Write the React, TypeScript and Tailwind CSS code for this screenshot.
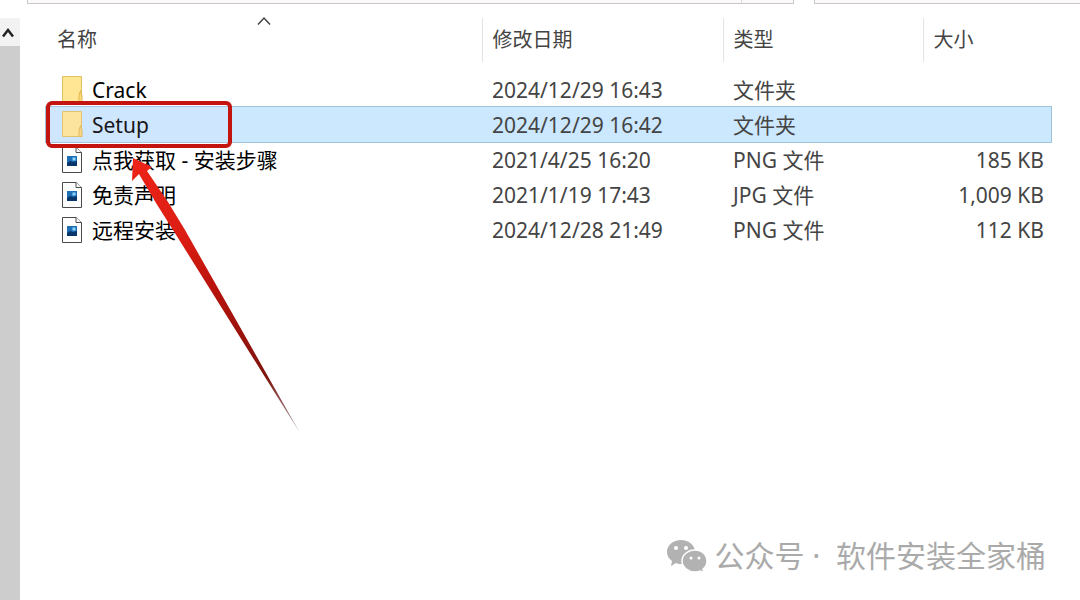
import React, { useState } from 'react';

type Kind = 'folder' | 'image';

interface Entry {
  name: string;
  kind: Kind;
  modified: string;
  type: string;
  size: string;
}

const ENTRIES: Entry[] = [
  { name: 'Crack', kind: 'folder', modified: '2024/12/29 16:43', type: '文件夹', size: '' },
  { name: 'Setup', kind: 'folder', modified: '2024/12/29 16:42', type: '文件夹', size: '' },
  { name: '点我获取 - 安装步骤', kind: 'image', modified: '2021/4/25 16:20', type: 'PNG 文件', size: '185 KB' },
  { name: '免责声明', kind: 'image', modified: '2021/1/19 17:43', type: 'JPG 文件', size: '1,009 KB' },
  { name: '远程安装', kind: 'image', modified: '2024/12/28 21:49', type: 'PNG 文件', size: '112 KB' },
];

const FolderIcon = () => (
  <svg className="w-6 h-7 shrink-0" viewBox="0 0 24 28" aria-hidden="true">
    <path d="M2.5 .5h19v25h-19z" fill="#ffe694" stroke="#e3c15f" />
    <path d="M19 25.5v-6l1.500-5 1.500 5v6z" fill="#fbd978" stroke="#dfb74e" />
  </svg>
);

const ImageIcon = () => (
  <svg className="w-6 h-7 shrink-0" viewBox="0 0 24 28" aria-hidden="true">
    <path d="M2.5 1.500H16l5.500 5v20h-19z" fill="#fff" stroke="#4a4a4a" />
    <path d="M16 1.500v5h5.500" fill="#fff" stroke="#4a4a4a" />
    <path d="M7 10h10v10H7z" fill="#1f6fb5" />
    <path d="M7 17l3-2 3 1 4-1v5H7z" fill="#08366b" />
    <path d="M12.500 11.500h3v3h-3z" fill="#8fd8ff" />
  </svg>
);

const Arrow = () => (
  <svg className="absolute left-[120px] top-[150px] w-[190px] h-[290px] pointer-events-none" viewBox="120 150 190 290" aria-hidden="true">
    <defs>
      <linearGradient id="arrow" gradientUnits="userSpaceOnUse" x1="133" y1="158" x2="299" y2="433">
        <stop offset="0" stopColor="#ee2418" />
        <stop offset="0.3" stopColor="#da1d13" />
        <stop offset="0.5" stopColor="#b3120b" />
        <stop offset="0.8" stopColor="#7d160f" />
        <stop offset="1" stopColor="#a9a3a5" />
      </linearGradient>
    </defs>
    <path
      d="M133 158L152 167L147 171L168 202L185 230L300 433L173 230L156 203L139 174L132 181Z"
      fill="url(#arrow)"
    />
  </svg>
);

const WechatIcon = () => (
  <svg className="w-10 h-9" viewBox="0 0 40 36" aria-hidden="true">
    <path d="M14 2C6 2 0 7 0 14c0 4 2 7 5 9l-1 5 5-3c2 1 3 1 5 1 8 0 14-5 14-12S22 2 14 2z" fill="#b2b2b2" />
    <path
      d="M28 12c-7 0-13 5-13 11s6 11 13 11c2 0 4 0 5-1l4 2-1-4c3-2 4-5 4-8 0-6-5-11-12-11z"
      fill="#b2b2b2"
      stroke="#fff"
      strokeWidth="1.500"
    />
    <g fill="#fff">
      <circle cx="9" cy="10" r="2" />
      <circle cx="19" cy="10" r="2" />
      <circle cx="24" cy="20" r="1.500" />
      <circle cx="32" cy="20" r="1.500" />
    </g>
  </svg>
);

export default function App() {
  const [selected, setSelected] = useState('Setup');

  return (
    <div className="relative min-h-screen flex bg-white overflow-hidden text-[20px] leading-6 text-[#444] font-['Noto_Sans','Noto_Sans_CJK_SC',sans-serif]">
      {/* Scrollbar of the navigation pane */}
      <div className="w-5 shrink-0 flex flex-col pt-[18px]">
        <button aria-label="向上滚动" className="h-7 flex items-center justify-center bg-[#f2f2f2]">
          <svg className="w-4 h-4" viewBox="0 0 16 16" fill="none" aria-hidden="true">
            <path d="M1 12.500L6 6l5 6.500" stroke="#222" strokeWidth="2.500" />
          </svg>
        </button>
        <div className="flex-1 bg-[#cdcdcd]" />
      </div>

      <main className="flex-1 min-w-0 flex flex-col">
        {/* Bottom edge of the address bar and the search box */}
        <div className="flex gap-5 h-1 pl-[7px]">
          <div className="flex-1 flex justify-end bg-[#fcf9fb] border border-t-0 border-[#c9c7c8]">
            <div className="w-[52px] border-l border-[#dcdadb]" />
          </div>
          <div className="w-[266px] bg-[#fcf9fb] border border-t-0 border-r-0 border-[#c9c7c8]" />
        </div>

        <div className="pl-[26px] pr-[29px] pt-[14px]">
          <table className="w-full table-fixed border-collapse text-left">
            <colgroup>
              <col />
              <col className="w-[241px]" />
              <col className="w-[200px]" />
              <col className="w-32" />
            </colgroup>
            <thead>
              <tr className="h-[44px]">
                <th className="relative p-0 pl-[11px] font-normal">
                  名称
                  <svg className="absolute left-1/2 -top-1 w-4 h-4 -translate-x-1/2" viewBox="0 0 16 16" fill="none" aria-hidden="true">
                    <path d="M2 10.500L8 4l6 6.500" stroke="#444" strokeWidth="1.500" />
                  </svg>
                </th>
                <th className="p-0 pl-[10px] font-normal border-l border-[#e3e3e3]">修改日期</th>
                <th className="p-0 pl-[10px] font-normal border-l border-[#e3e3e3]">类型</th>
                <th className="p-0 pl-[10px] font-normal border-l border-[#e3e3e3]">大小</th>
              </tr>
            </thead>
            <tbody className="text-[21px]">
              <tr className="h-[10px]" aria-hidden="true">
                <td colSpan={4} className="p-0" />
              </tr>
              {ENTRIES.map(entry => (
                <tr
                  key={entry.name}
                  onClick={() => setSelected(entry.name)}
                  className={entry.name === selected ? 'h-[35px] bg-[#cce8ff] outline outline-1 outline-[#9fc3dc]' : 'h-[35px]'}
                >
                  <td className="relative p-0 pl-[14px]">
                    <div className="flex items-center gap-2 text-black">
                      {entry.kind === 'folder' ? <FolderIcon /> : <ImageIcon />}
                      <span className="whitespace-nowrap">{entry.name}</span>
                    </div>
                    {entry.name === 'Setup' && (
                      <div className="absolute left-0 -top-1.5 z-10 w-[186px] h-[47px] rounded-md border-4 border-[#c3140f] bg-[#e8d8ff]/10 pointer-events-none" />
                    )}
                  </td>
                  <td className="p-0 pl-[10px] whitespace-nowrap">{entry.modified}</td>
                  <td className="p-0 pl-[10px] whitespace-nowrap">{entry.type}</td>
                  <td className="p-0 pr-[7px] text-right whitespace-nowrap">{entry.size}</td>
                </tr>
              ))}
            </tbody>
          </table>
        </div>

        <div className="mt-auto self-end flex items-center gap-2 pr-[34px] pb-6 text-[30px] leading-10 text-[#aaa]">
          <WechatIcon />
          <span>公众号 ·&nbsp; 软件安装全家桶</span>
        </div>
      </main>

      <Arrow />
    </div>
  );
}
